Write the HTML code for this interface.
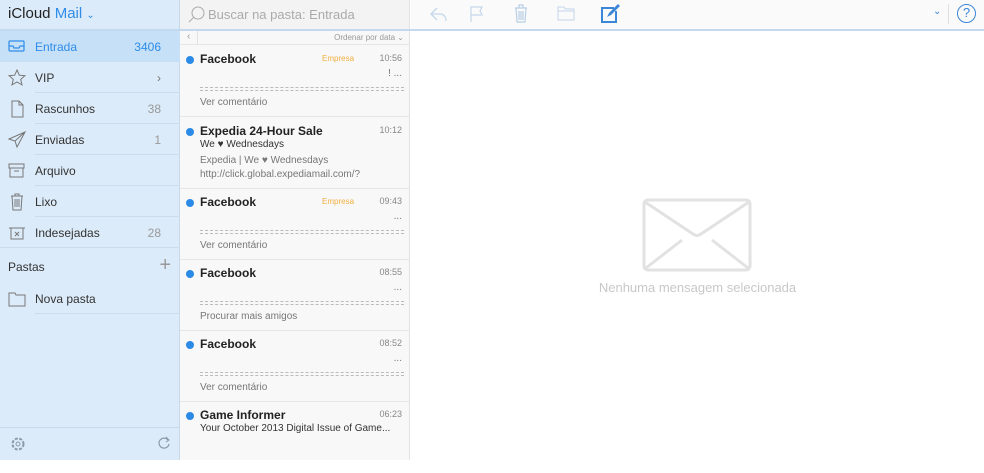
<!DOCTYPE html>
<html><head><meta charset="utf-8"><style>
*{margin:0;padding:0;box-sizing:border-box}
body{width:984px;height:460px;overflow:hidden;font-family:"Liberation Sans",sans-serif;background:#fff;position:relative;font-size:12px}
.sb{position:absolute;left:0;top:0;width:180px;height:460px;background:#dcebf9;border-right:1px solid #c9d9e8}
.logo{position:absolute;left:8px;top:5px;font-size:15px;color:#222}
.logo span{color:#2f8ce8}
.hdrline{position:absolute;left:0;top:29px;width:984px;height:2px;background:#c3d9ee}
.row{position:absolute;left:0;width:180px;height:31px;color:#333;font-size:12px}
.row .t{position:absolute;left:35px;top:9px}
.row .n{position:absolute;right:19px;top:9px;color:#999}
.row .ln{position:absolute;left:35px;right:0;bottom:0;height:1px;background:#cbdcec}
.row svg{position:absolute;left:8px;top:7px}
.sel{background:#c5e0f7}
.sel .t,.sel .n{color:#2f8ce8}
.list{position:absolute;left:180px;top:0;width:230px;height:460px;background:#f8f8f8;border-right:1px solid #e2e2e2}
.search{position:absolute;left:180px;top:0;width:230px;height:29px;background:#f3f3f3;border-right:1px solid #e2e2e2}
.search span{position:absolute;left:28px;top:7px;font-size:13px;color:#aaa}
.it{position:absolute;left:0;width:230px;height:71px;border-bottom:1px solid #e6e6e6}
.it .dot{position:absolute;left:6px;top:10px;width:8px;height:8px;border-radius:50%;background:#2a8ae6}
.it .f{position:absolute;left:20px;top:6px;font-weight:bold;font-size:12px;color:#222}
.it .tm{position:absolute;right:8px;top:7px;font-size:9px;color:#888}
.it .em{position:absolute;left:142px;top:8px;font-size:8px;color:#f0b040}
.it .l{position:absolute;left:20px;font-size:10px;color:#777;white-space:nowrap}
.it .eq{position:absolute;left:20px;right:6px;top:41px;height:4px;border-top:1px dashed #bbb;border-bottom:1px dashed #bbb}
.tb{position:absolute;left:411px;top:0;width:573px;height:29px;background:#fafafa}
</style></head><body>
<div class="sb">
<div class="logo">iCloud <span>Mail</span> <span style="font-size:10px">&#8964;</span></div>
<div class="row sel" style="top:31px"><svg width="18" height="16"><rect x="1" y="3" width="15" height="10" rx="1" fill="none" stroke="#2f8ce8" stroke-width="1.2"/><path d="M1 8h4l1 2h5l1-2h4" fill="none" stroke="#2f8ce8" stroke-width="1.2"/></svg><span class="t">Entrada</span><span class="n">3406</span></div>
<div class="row" style="top:62px"><svg width="18" height="18"><path d="M9 1l2.3 5.2 5.6.5-4.2 3.7 1.3 5.5L9 13l-5 2.9 1.3-5.5L1.1 6.7l5.6-.5z" fill="none" stroke="#777" stroke-width="1"/></svg><span class="t">VIP</span><span class="n" style="color:#777">&#8250;</span><div class="ln"></div></div>
<div class="row" style="top:93px"><svg width="18" height="18"><path d="M4 1h7l4 4v12H4z M11 1v4h4" fill="none" stroke="#777" stroke-width="1"/></svg><span class="t">Rascunhos</span><span class="n">38</span><div class="ln"></div></div>
<div class="row" style="top:124px"><svg width="18" height="18"><path d="M17 1L1 8l6 2 2 6z M7 10L17 1" fill="none" stroke="#777" stroke-width="1"/></svg><span class="t">Enviadas</span><span class="n">1</span><div class="ln"></div></div>
<div class="row" style="top:155px"><svg width="18" height="18"><rect x="1" y="2" width="15" height="4" fill="none" stroke="#777"/><rect x="2" y="6" width="13" height="9" fill="none" stroke="#777"/><path d="M6 9h5" stroke="#777"/></svg><span class="t">Arquivo</span><div class="ln"></div></div>
<div class="row" style="top:186px"><svg width="18" height="18"><path d="M3 3h12M7 3V1h4v2M4 3l1 14h8l1-14M7 6v8M9 6v8M11 6v8" fill="none" stroke="#777"/></svg><span class="t">Lixo</span><div class="ln"></div></div>
<div class="row" style="top:217px"><svg width="18" height="18"><path d="M1 4h16M3 4v11h12V4M7 8l4 4M11 8l-4 4" fill="none" stroke="#777"/></svg><span class="t">Indesejadas</span><span class="n">28</span><div class="ln" style="left:0"></div></div>
<div class="row" style="top:251px"><span class="t" style="left:8px;top:9px">Pastas</span><span class="n" style="right:9px;top:3px;font-size:20px;font-weight:100;color:#999">+</span></div>
<div class="row" style="top:283px"><svg width="18" height="18"><path d="M1 3h6l1 2h9v11H1z" fill="none" stroke="#777"/></svg><span class="t">Nova pasta</span><div class="ln"></div></div>
<div style="position:absolute;left:0;top:427px;width:180px;height:1px;background:#c7d8e8"></div>
<svg style="position:absolute;left:10px;top:436px" width="16" height="16"><circle cx="8" cy="8" r="5.5" fill="none" stroke="#8a9aa8" stroke-dasharray="3 1.5" stroke-width="2"/><circle cx="8" cy="8" r="2" fill="none" stroke="#8a9aa8"/></svg>
<svg style="position:absolute;left:157px;top:436px" width="14" height="14"><path d="M11 4A5 5 0 1 0 12 8" fill="none" stroke="#8a9aa8" stroke-width="1.2"/><path d="M9 1l3 3-3 2" fill="none" stroke="#8a9aa8"/></svg>
</div>
<div class="list">
<div style="position:absolute;left:0;top:31px;width:230px;height:14px;border-bottom:1px solid #e6e6e6"><span style="position:absolute;left:7px;top:0;font-size:10px;color:#999">&#8249;</span><span style="position:absolute;right:6px;top:2px;font-size:8px;color:#999">Ordenar por data &#8964;</span><div style="position:absolute;left:17px;top:0;width:1px;height:14px;background:#e2e2e2"></div></div>
<div class="it" style="top:46px"><div class="dot"></div><div class="f">Facebook</div><div class="em">Empresa</div><div class="tm">10:56</div><div class="l" style="right:8px;left:auto;top:22px">! ...</div><div class="eq"></div><div class="l" style="top:51px">Ver comentário</div></div>
<div class="it" style="top:118px"><div class="dot"></div><div class="f">Expedia 24-Hour Sale</div><div class="tm">10:12</div><div class="l" style="top:21px;color:#333">We &#9829; Wednesdays</div><div class="l" style="top:37px">Expedia | We &#9829; Wednesdays</div><div class="l" style="top:51px">http://click.global.expediamail.com/?</div></div>
<div class="it" style="top:189px"><div class="dot"></div><div class="f">Facebook</div><div class="em">Empresa</div><div class="tm">09:43</div><div class="l" style="right:8px;left:auto;top:22px">...</div><div class="eq"></div><div class="l" style="top:51px">Ver comentário</div></div>
<div class="it" style="top:260px"><div class="dot"></div><div class="f">Facebook</div><div class="tm">08:55</div><div class="l" style="right:8px;left:auto;top:22px">...</div><div class="eq"></div><div class="l" style="top:51px">Procurar mais amigos</div></div>
<div class="it" style="top:331px"><div class="dot"></div><div class="f">Facebook</div><div class="tm">08:52</div><div class="l" style="right:8px;left:auto;top:22px">...</div><div class="eq"></div><div class="l" style="top:51px">Ver comentário</div></div>
<div class="it" style="top:402px;border:none"><div class="dot"></div><div class="f">Game Informer</div><div class="tm">06:23</div><div class="l" style="top:21px;color:#333">Your October 2013 Digital Issue of Game...</div></div>
</div>
<div class="search"><svg style="position:absolute;left:8px;top:6px" width="18" height="18"><circle cx="10" cy="7" r="6" fill="none" stroke="#aaa"/><path d="M6 11l-5 5" stroke="#aaa"/></svg><span>Buscar na pasta: Entrada</span></div>
<div class="tb">
<svg style="position:absolute;left:18px;top:5px" width="20" height="18"><path d="M8 3L2 9l6 6M2 9h9c4 0 6 3 6 7" fill="none" stroke="#c4d7ea" stroke-width="1.3"/></svg>
<svg style="position:absolute;left:58px;top:5px" width="16" height="18"><path d="M2 17V2h11l-2 4 2 4H2" fill="none" stroke="#c4d7ea" stroke-width="1.2"/></svg>
<svg style="position:absolute;left:102px;top:3px" width="16" height="20"><path d="M2 5h12M6 5V2h4v3M3 5l1 14h8l1-14M6 8v9M8 8v9M10 8v9" fill="none" stroke="#b8cfe6" stroke-width="1.2"/></svg>
<svg style="position:absolute;left:146px;top:5px" width="18" height="16"><path d="M1 2h6l1 2h9v11H1z M1 6h16" fill="none" stroke="#c4d7ea"/></svg>
<svg style="position:absolute;left:189px;top:2px" width="22" height="22"><path d="M14 6H2v14h14V9" fill="none" stroke="#3a86d8" stroke-width="2"/><path d="M7 15l2-4 9-9 2 2-9 9z" fill="#3a86d8"/></svg>
<span style="position:absolute;left:522px;top:6px;color:#3a86d8;font-size:10px">&#8964;</span>
<div style="position:absolute;left:537px;top:4px;width:1px;height:20px;background:#e0e0e0"></div>
<div style="position:absolute;left:546px;top:4px;width:19px;height:19px;border:1.5px solid #3a86d8;border-radius:50%;color:#3a86d8;font-size:13px;text-align:center;line-height:16px">?</div>
</div>
<div class="hdrline"></div>
<svg style="position:absolute;left:642px;top:198px" width="110" height="74"><rect x="2" y="2" width="106" height="70" rx="4" fill="none" stroke="#e2e2e2" stroke-width="3"/><path d="M3 4l48 32q4 3 8 0l48-32M4 70l36-28M106 70l-36-28" fill="none" stroke="#e2e2e2" stroke-width="3"/></svg>
<div style="position:absolute;left:411px;width:573px;top:280px;text-align:center;color:#c8c8c8;font-size:13px">Nenhuma mensagem selecionada</div>
</body></html>
